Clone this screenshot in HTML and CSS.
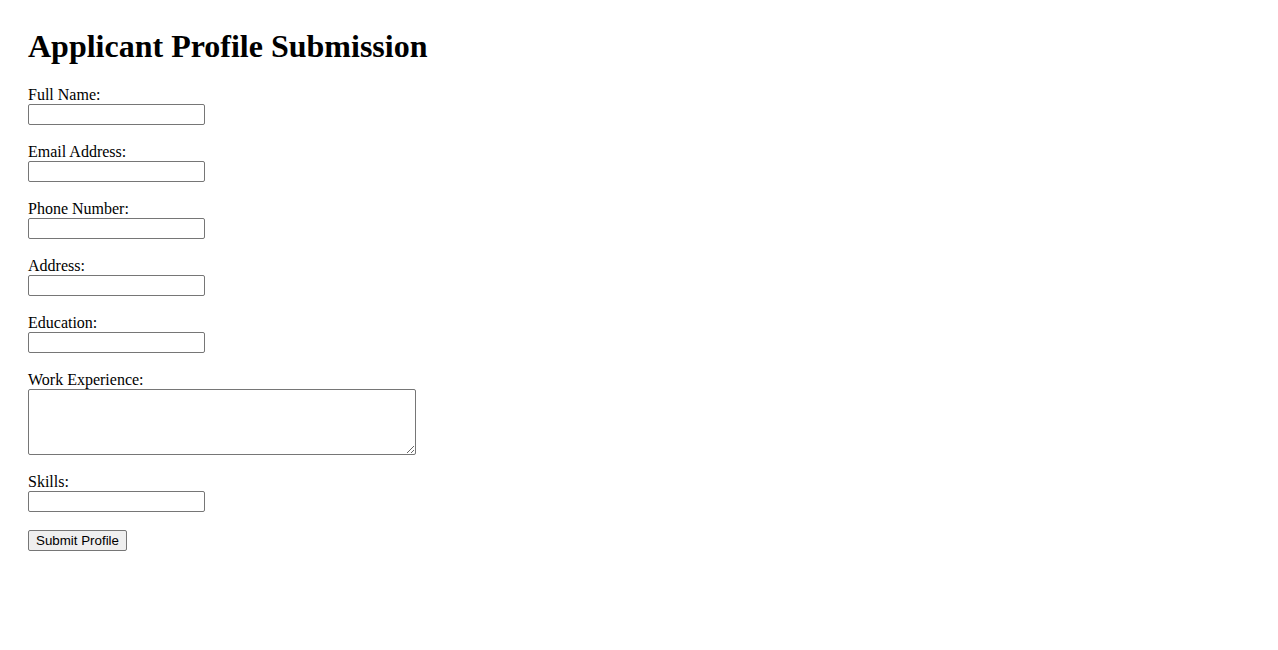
FILE: index.html
```html
<!DOCTYPE html>
<html lang="en">
<head>
<meta charset="utf-8">
<title>Applicant Profile Submission</title>
<link rel="stylesheet" href="styles.css">
</head>
<body>
<div class="page">
  <h1 class="title">Applicant Profile Submission</h1>
  <form class="profile-form">
    <div class="field">
      <label class="field-label" for="name">Full Name:</label>
      <input class="text-input" type="text" id="name">
    </div>
    <div class="field">
      <label class="field-label" for="email">Email Address:</label>
      <input class="text-input" type="email" id="email">
    </div>
    <div class="field">
      <label class="field-label" for="phone">Phone Number:</label>
      <input class="text-input" type="tel" id="phone">
    </div>
    <div class="field">
      <label class="field-label" for="address">Address:</label>
      <input class="text-input" type="text" id="address">
    </div>
    <div class="field">
      <label class="field-label" for="education">Education:</label>
      <input class="text-input" type="text" id="education">
    </div>
    <div class="field">
      <label class="field-label" for="experience">Work Experience:</label>
      <textarea class="text-area" id="experience" rows="4" cols="50"></textarea>
    </div>
    <div class="field">
      <label class="field-label" for="skills">Skills:</label>
      <input class="text-input" type="text" id="skills">
    </div>
    <button class="submit-btn" type="submit">Submit Profile</button>
  </form>
</div>
</body>
</html>
```

FILE: styles.css
```css
html, body {
  background: #ffffff;
}
body {
  margin: 8px;
  font-family: "Liberation Serif", "Times New Roman", serif;
  font-size: 16px;
  color: #000000;
}
.page {
  padding: 20px;
}
.title {
  margin: 0 0 21px 0;
  font-size: 32px;
  font-weight: bold;
  line-height: 37px;
}
.profile-form {
  display: flex;
  flex-direction: column;
  align-items: flex-start;
}
.field {
  display: flex;
  flex-direction: column;
  align-items: flex-start;
  margin-bottom: 18px;
}
.field-label {
  display: block;
  line-height: 18px;
  height: 18px;
}
.text-input {
  box-sizing: border-box;
  width: 177px;
  height: 21px;
  margin: 0;
  padding: 1px 2px;
  border: 1px solid #767676;
  border-radius: 2px;
  background: #ffffff;
  font-family: "Liberation Sans", Arial, sans-serif;
  font-size: 13.33px;
}
.text-area {
  box-sizing: border-box;
  width: 388px;
  height: 66px;
  margin: 0;
  padding: 2px;
  border: 1px solid #767676;
  border-radius: 2px;
  background: #ffffff;
  font-family: "Liberation Mono", monospace;
  font-size: 13.33px;
  resize: both;
}
.submit-btn {
  box-sizing: border-box;
  width: 99px;
  height: 21px;
  margin: 0;
  padding: 1px 6px;
  border: 1px solid #767676;
  border-radius: 2px;
  background: #efefef;
  color: #000000;
  font-family: "Liberation Sans", Arial, sans-serif;
  font-size: 13.33px;
  line-height: 17px;
}
```
